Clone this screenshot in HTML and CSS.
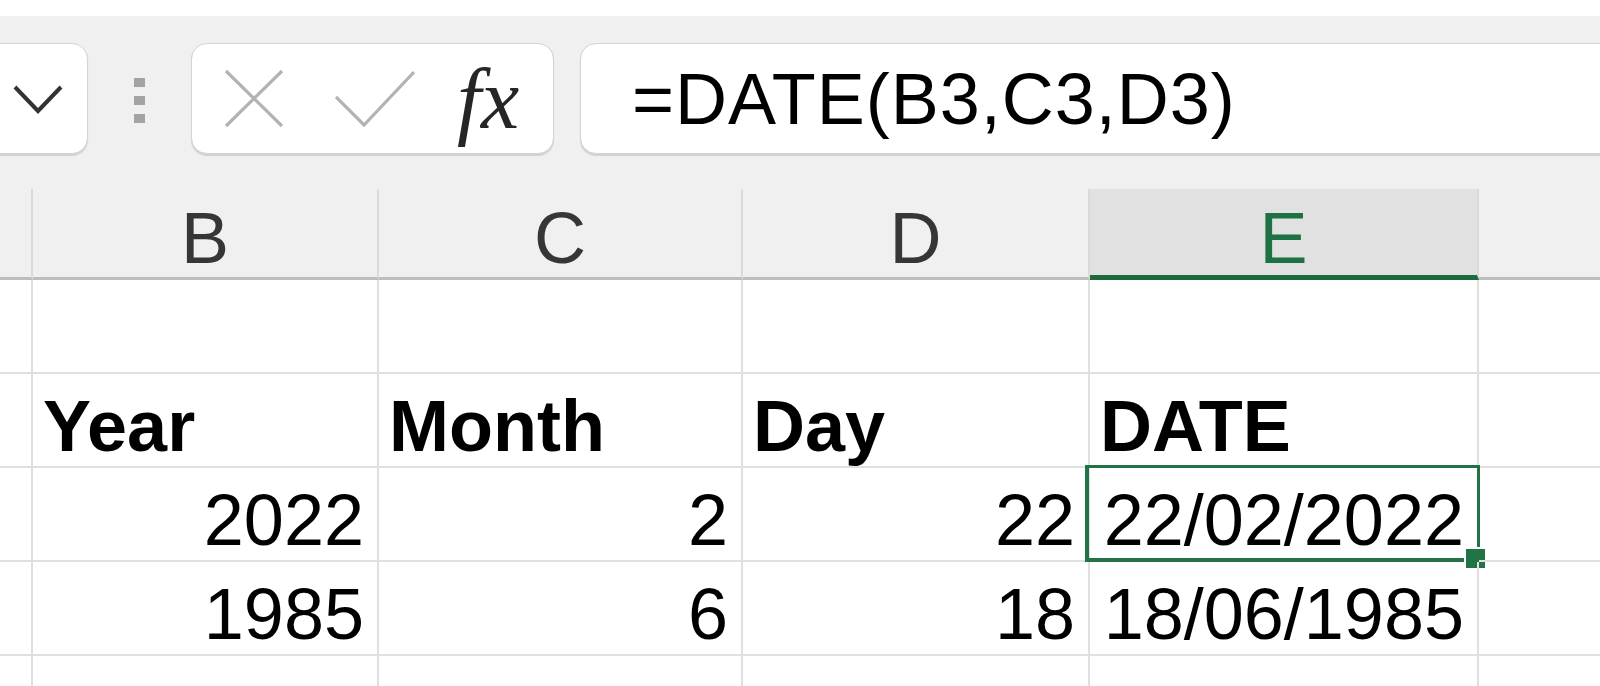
FILE: index.html
```html
<!DOCTYPE html>
<html lang="en">
<head>
<meta charset="utf-8">
<title>DATE function</title>
<link rel="stylesheet" href="styles.css">
</head>
<body>
<div class="top"></div>
<div class="toolbar">
  <div class="namebox">
    <svg class="chev" width="50" height="30" viewBox="0 0 50 30"><polyline points="2,3 25,27 48,3" fill="none" stroke="#333" stroke-width="4"/></svg>
  </div>
  <div class="grip"><span></span><span></span><span></span></div>
  <div class="fxbox">
    <svg class="ico-x" width="60" height="59" viewBox="0 0 60 59"><path d="M2 2 L58 57 M58 2 L2 57" fill="none" stroke="#b3b3b3" stroke-width="3.2"/></svg>
    <svg class="ico-ok" width="80" height="57" viewBox="0 0 80 57"><polyline points="1,27 29,55 79,2" fill="none" stroke="#b3b3b3" stroke-width="3.2"/></svg>
    <span class="fx">fx</span>
  </div>
  <div class="formula">=DATE(B3,C3,D3)</div>
</div>
<div class="sheet">
  <div class="ch"></div>
  <div class="ch">B</div>
  <div class="ch">C</div>
  <div class="ch">D</div>
  <div class="ch sel">E</div>
  <div class="ch last"></div>

  <div class="c"></div><div class="c"></div><div class="c"></div><div class="c"></div><div class="c"></div><div class="c last"></div>

  <div class="c"></div>
  <div class="c b">Year</div>
  <div class="c b">Month</div>
  <div class="c b">Day</div>
  <div class="c b">DATE</div>
  <div class="c last"></div>

  <div class="c"></div>
  <div class="c n">2022</div>
  <div class="c n">2</div>
  <div class="c n">22</div>
  <div class="c n active">22/02/2022<span class="selbox"></span><span class="handle"></span></div>
  <div class="c last"></div>

  <div class="c"></div>
  <div class="c n">1985</div>
  <div class="c n">6</div>
  <div class="c n">18</div>
  <div class="c n">18/06/1985</div>
  <div class="c last"></div>

  <div class="c"></div><div class="c"></div><div class="c"></div><div class="c"></div><div class="c"></div><div class="c last"></div>
</div>
</body>
</html>
```
FILE: styles.css
```css
html, body {
  margin: 0;
  padding: 0;
  overflow: hidden;
  background: #ffffff;
  font-family: "Liberation Sans", Arial, sans-serif;
}

.top {
  height: 16px;
  background: #ffffff;
}

.toolbar {
  height: 173px;
  box-sizing: border-box;
  padding-top: 27px;
  background: #f0f0f0;
  display: flex;
  align-items: flex-start;
}

.namebox,
.fxbox,
.formula {
  height: 111px;
  box-sizing: border-box;
  background: #ffffff;
  border: 1px solid #d4d4d4;
  border-radius: 16px;
  box-shadow: 0 1.5px 1px rgba(0, 0, 0, 0.13);
}

.namebox {
  width: 138px;
  margin-left: -50px;
  flex: none;
  display: flex;
  align-items: center;
  padding-left: 62px;
}

.chev {
  display: block;
  margin-top: 1px;
}

.grip {
  flex: none;
  width: 11px;
  margin-left: 46px;
  height: 111px;
  display: flex;
  flex-direction: column;
  justify-content: center;
  gap: 9px;
  padding-top: 4px;
  box-sizing: border-box;
}

.grip span {
  display: block;
  width: 11px;
  height: 9px;
  background: #a3a3a3;
}

.fxbox {
  flex: none;
  width: 363px;
  margin-left: 46px;
  display: flex;
  align-items: center;
  padding-left: 32px;
}

.ico-x,
.ico-ok {
  display: block;
  flex: none;
}

.ico-ok {
  margin-left: 51px;
}

.fx {
  margin-left: 42px;
  font-family: "Liberation Serif", "Times New Roman", serif;
  font-style: italic;
  font-size: 86px;
  line-height: normal;
  color: #262626;
}

.formula {
  flex: 1;
  margin-left: 26px;
  margin-right: -40px;
  display: flex;
  align-items: center;
  padding-left: 51px;
  font-size: 72px;
  letter-spacing: 1px;
  color: #000;
  white-space: nowrap;
}

.sheet {
  display: grid;
  grid-template-columns: 33px 346px 364px 347px 389px 1fr;
  grid-template-rows: 91px repeat(5, 94px);
}

.ch {
  box-sizing: border-box;
  background: #f0f0f0;
  border-right: 2px solid #dadada;
  border-bottom: 3px solid #bdbdbd;
  display: flex;
  align-items: flex-end;
  justify-content: center;
  padding-bottom: 3px;
  font-size: 72px;
  line-height: 1;
  color: #363636;
}

.ch.sel {
  background: #e1e1e1;
  color: #1e7145;
  border-bottom: 5px solid #1b6b3f;
  padding-bottom: 1px;
}

.c {
  position: relative;
  box-sizing: border-box;
  border-right: 2px solid #e0e0e0;
  border-bottom: 2px solid #e0e0e0;
  display: flex;
  align-items: flex-end;
  padding: 0 10px 4px 10px;
  font-size: 72px;
  line-height: 1;
  color: #000;
  white-space: nowrap;
}

.ch.last,
.c.last {
  border-right: none;
}

.c.b {
  font-weight: bold;
}

.c.n {
  justify-content: flex-end;
  padding-right: 13px;
}

.selbox {
  position: absolute;
  top: -3px;
  left: -5px;
  right: -3px;
  bottom: -2px;
  border: 3px solid #217346;
  border-left-width: 4px;
  border-bottom-width: 4px;
}

.handle {
  position: absolute;
  width: 19px;
  height: 19px;
  right: -8px;
  bottom: -8px;
  background: #217346;
  box-shadow: 0 0 0 2px #ffffff;
}
```
